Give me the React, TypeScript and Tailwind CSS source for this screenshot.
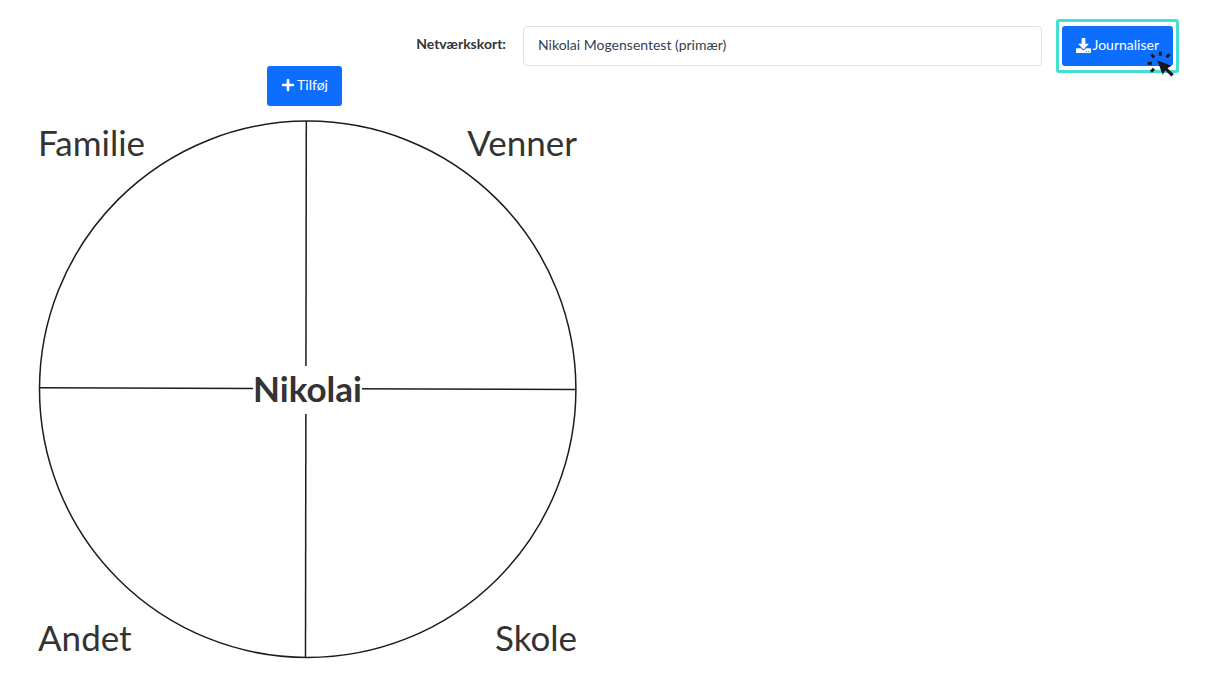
import { FaDownload, FaPlus } from "react-icons/fa";

function ClickCursor() {
  return (
    <svg
      viewBox="0 0 28 28"
      aria-hidden="true"
      className="pointer-events-none absolute right-px -bottom-[7px] size-7"
    >
      <g stroke="#17171c" strokeWidth="3" fill="none">
        <path d="M0.5 14.3H5" />
        <path d="M4.3 5.5L7.2 8.3" />
        <path d="M13.4 2.6V6.6" />
        <path d="M22.5 5.3L19.5 8.3" />
        <path d="M7 19.8L4 22.8" />
      </g>
      <path
        d="M10.4 11.4L24.6 16.8L20.5 19.3L26.8 25.2L24.4 27.6L18.3 21.5L15.6 25.8Z"
        fill="#17171c"
      />
    </svg>
  );
}

function CircleChart() {
  return (
    <svg
      viewBox="0 0 539 539"
      aria-hidden="true"
      className="absolute inset-0 size-full"
      fill="none"
      stroke="#1c1c1c"
      strokeWidth="1.5"
    >
      <circle cx="269.7" cy="269.3" r="268.2" />
      <path d="M268.3 1L267.5 537.5" />
      <path d="M1.5 267.8L538 269.4" />
    </svg>
  );
}

const button =
  "flex h-10 cursor-pointer items-center rounded-[3px] bg-[#0d6efd] px-3.5 pb-0.5 text-sm text-white";

export default function App() {
  return (
    <main className="min-h-screen bg-white pt-[26px] pb-10 font-['Lato',sans-serif] text-[#333]">
      <header className="flex items-center pr-10">
        <label
          htmlFor="kort"
          className="w-[43%] pr-px pb-1 text-right text-sm font-bold"
        >
          Netværkskort:
        </label>
        <select
          id="kort"
          className="ml-4 h-10 min-w-0 flex-1 appearance-none rounded-[4px] border border-[#d8e2ea] bg-white px-3.5 pb-0.5 text-sm text-[#334155]"
        >
          <option>Nikolai Mogensentest (primær)</option>
        </select>
        <div className="relative -my-2 ml-3.5 rounded-[3px] border-3 border-[#44dfd0] px-[3px] py-1">
          <button type="button" className={button}>
            <FaDownload className="mr-0.5 size-[15px]" />
            Journaliser
          </button>
          <ClickCursor />
        </div>
      </header>

      <section className="ml-[38px] w-[539px] max-w-full">
        <div className="flex justify-center pr-1.5">
          <button type="button" className={button}>
            <FaPlus className="mr-0.5 size-3.5" />
            Tilføj
          </button>
        </div>
        <div className="relative mt-3.5 aspect-square text-[35px] leading-11">
          <CircleChart />
          <div className="relative grid h-full grid-cols-2 grid-rows-[1fr_auto_1fr]">
            <h2>Familie</h2>
            <h2 className="text-right">Venner</h2>
            <h1 className="col-span-2 justify-self-center bg-white pb-1 font-bold">
              Nikolai
            </h1>
            <h2 className="self-end">Andet</h2>
            <h2 className="self-end text-right">Skole</h2>
          </div>
        </div>
      </section>
    </main>
  );
}
